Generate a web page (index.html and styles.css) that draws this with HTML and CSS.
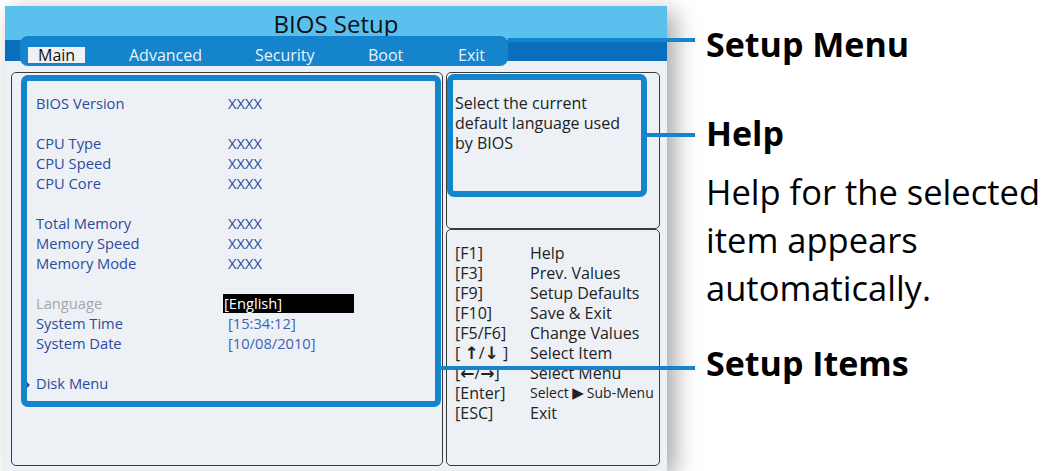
FILE: index.html
```html
<!DOCTYPE html>
<html lang="en">
<head>
    <meta charset="UTF-8">
    <meta name="viewport" content="width=device-width, initial-scale=1.0">
    <title>BIOS Setup</title>
    <link rel="stylesheet" href="styles.css">
</head>
<body>
    <div class="figure">
        <div class="bios">
            <div class="title-bar">BIOS Setup</div>
            <div class="menu-bar">
                <nav class="menu">
                    <span class="menu-item item-main"><span class="tab active">Main</span></span>
                    <span class="menu-item item-advanced"><span class="tab">Advanced</span></span>
                    <span class="menu-item item-security"><span class="tab">Security</span></span>
                    <span class="menu-item item-boot"><span class="tab">Boot</span></span>
                    <span class="menu-item"><span class="tab">Exit</span></span>
                </nav>
            </div>
            <div class="bios-body">
                <div class="panel items-panel">
                    <div class="callout items-box">
                        <div class="group">
                            <div class="row"><span>BIOS Version</span><span>XXXX</span></div>
                        </div>
                        <div class="group">
                            <div class="row"><span>CPU Type</span><span>XXXX</span></div>
                            <div class="row"><span>CPU Speed</span><span>XXXX</span></div>
                            <div class="row"><span>CPU Core</span><span>XXXX</span></div>
                        </div>
                        <div class="group">
                            <div class="row"><span>Total Memory</span><span>XXXX</span></div>
                            <div class="row"><span>Memory Speed</span><span>XXXX</span></div>
                            <div class="row"><span>Memory Mode</span><span>XXXX</span></div>
                        </div>
                        <div class="group">
                            <div class="row"><span class="disabled">Language</span><span><span class="selected">[English]</span></span></div>
                            <div class="row"><span>System Time</span><span class="setting">[15:34:12]</span></div>
                            <div class="row"><span>System Date</span><span class="setting">[10/08/2010]</span></div>
                        </div>
                        <div class="group">
                            <div class="row"><span><i class="marker"></i>Disk Menu</span></div>
                        </div>
                    </div>
                </div>
                <div class="side">
                    <div class="panel help-panel">
                        <div class="callout help-box">
                            <p>Select the current<br>default language used<br>by BIOS</p>
                        </div>
                    </div>
                    <div class="panel keys-panel">
                        <div class="key-row"><span>[F1]</span><span>Help</span></div>
                        <div class="key-row"><span>[F3]</span><span>Prev. Values</span></div>
                        <div class="key-row"><span>[F9]</span><span>Setup Defaults</span></div>
                        <div class="key-row"><span>[F10]</span><span>Save &amp; Exit</span></div>
                        <div class="key-row"><span>[F5/F6]</span><span>Change Values</span></div>
                        <div class="key-row"><span>[ <b class="arrow">↑</b>/<b class="arrow">↓</b> ]</span><span>Select Item</span></div>
                        <div class="key-row"><span>[<b class="arrow">←</b>/<b class="arrow">→</b>]</span><span>Select Menu</span></div>
                        <div class="key-row"><span>[Enter]</span><span class="small">Select <span class="play">▶</span>Sub-Menu</span></div>
                        <div class="key-row"><span>[ESC]</span><span>Exit</span></div>
                    </div>
                </div>
            </div>
        </div>

        <div class="notes">
            <div class="note-title">Setup Menu</div>
            <div class="note-title help-title">Help</div>
            <div class="note-text">Help for the selected<br>item appears<br>automatically.</div>
            <div class="note-title items-title">Setup Items</div>
        </div>

        <!-- callout lines -->
        <div class="connector line-menu"></div>
        <div class="connector line-help"></div>
        <div class="connector line-items"></div>
    </div>
</body>
</html>
```

FILE: styles.css
```css
body {
    margin: 0;
    background: #fff;
    font-family: "Open Sans", "Noto Sans", sans-serif;
}

.figure {
    position: relative;
    display: flex;
    height: 471px;
    padding: 6px 0 0 5px;
    box-sizing: border-box;
    overflow: hidden;
}

.bios {
    flex: none;
    width: 662px;
    height: 465px;
    display: flex;
    flex-direction: column;
    background: #edf1f6;
    box-shadow: 8px 6px 22px rgba(0, 0, 0, 0.35);
}

.title-bar {
    height: 34px;
    box-sizing: border-box;
    padding-top: 2px;
    line-height: 32px;
    text-align: center;
    font-size: 24px;
    color: #111;
    background: #5ac0ee;
}

.menu-bar {
    height: 21px;
    background: #0a6ebe;
}

.menu {
    position: relative;
    z-index: 1;
    display: flex;
    width: 488px;
    height: 30px;
    box-sizing: border-box;
    margin: -4px 0 0 15px;
    padding: 8px 0 0 8px;
    background: #1484cc;
    border-radius: 8px;
}

.menu-item {
    flex: none;
}
.item-main { width: 91px; }
.item-advanced { width: 126px; }
.item-security { width: 113px; }
.item-boot { width: 90px; }

.tab {
    display: inline-block;
    padding: 0 10px;
    font-size: 16px;
    line-height: 16px;
    color: #eaf3fb;
}
.tab.active {
    background: #eef2f7;
    color: #111;
}

.bios-body {
    flex: 1;
    display: flex;
    gap: 3px;
    padding: 11px 7px 5px 6px;
}

.panel {
    border: 1px solid #3a3a3a;
    border-radius: 5px;
    box-sizing: border-box;
}

.callout {
    border: 6px solid #1484cc;
    border-radius: 7px;
    box-sizing: border-box;
}

.items-panel {
    width: 432px;
    padding: 2px 0 0 9px;
}

.items-box {
    width: 420px;
    height: 332px;
    padding: 12px 0 0 9px;
}

.group {
    margin-bottom: 20px;
}

.row {
    display: grid;
    grid-template-columns: 192px auto;
    font-size: 14.7px;
    line-height: 20px;
    color: #2c4b9c;
}

.disabled {
    color: #a2a6ad;
}

.setting {
    color: #3a62b5;
}

.selected {
    display: inline-block;
    width: 130px;
    margin-left: -5px;
    padding-left: 1px;
    line-height: 19px;
    background: #000;
    color: #fff;
}

.marker {
    display: inline-block;
    margin: 0 6px 0 -9px;
    border-left: 3px solid #2c4b9c;
    border-top: 3px solid transparent;
    border-bottom: 3px solid transparent;
    vertical-align: middle;
}

.side {
    width: 214px;
    display: flex;
    flex-direction: column;
}

.help-panel {
    height: 157px;
    padding-top: 1px;
}

.help-box {
    width: 200px;
    height: 123px;
    padding: 13px 0 0 2px;
}
.help-box p {
    margin: 0;
    font-size: 16px;
    line-height: 20px;
    color: #222;
}

.keys-panel {
    flex: 1;
    padding: 13px 0 0 8px;
}

.key-row {
    display: grid;
    grid-template-columns: 75px auto;
    font-size: 16px;
    line-height: 20px;
    color: #222;
    white-space: nowrap;
}

.arrow {
    font-family: "DejaVu Sans", sans-serif;
    font-size: 17px;
    line-height: 1;
}

.small {
    font-size: 14px;
}
.play {
    font-family: "DejaVu Sans", sans-serif;
    font-size: 15px;
    margin-right: 3px;
}

.notes {
    margin-left: 39px;
    padding-top: 18px;
    display: flex;
    flex-direction: column;
    color: #000;
    white-space: nowrap;
}

.note-title {
    font-size: 34px;
    font-weight: 700;
    line-height: 40px;
}
.help-title {
    margin-top: 49px;
}
.note-text {
    margin-top: 15px;
    font-size: 34.5px;
    line-height: 48px;
}
.items-title {
    margin-top: 31px;
}

.connector {
    position: absolute;
    height: 4px;
    background: #1484cc;
}
.line-menu {
    left: 508px;
    top: 38px;
    width: 187px;
}
.line-help {
    left: 647px;
    top: 133px;
    width: 48px;
}
.line-items {
    left: 441px;
    top: 366px;
    width: 254px;
}
```
